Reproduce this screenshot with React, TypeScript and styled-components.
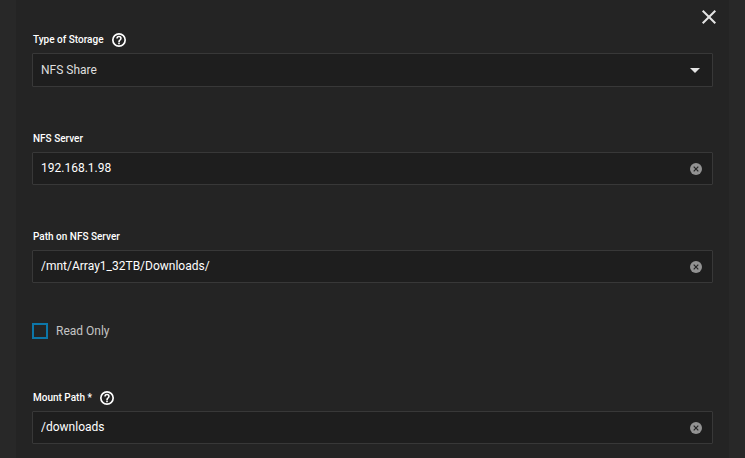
import React, { useState } from "react";
import styled, { createGlobalStyle } from "styled-components";

const GlobalStyle = createGlobalStyle`
  * { box-sizing: border-box; }
  html, body { margin: 0; background: #282828; }
  body { font-family: Roboto, "Liberation Sans", sans-serif; color: #fff; }
`;

const Page = styled.main`
  min-height: 100vh;
  padding: 0 16px;
  background: #282828;
`;

const Panel = styled.form`
  position: relative;
  display: flex;
  flex-direction: column;
  min-height: 100vh;
  padding: 31px 16px 14px;
  background: #242424;
`;

const CloseButton = styled.button`
  position: absolute;
  top: 9px;
  right: 12px;
  display: flex;
  padding: 0;
  border: 0;
  background: none;
  color: #e4e4e4;
  cursor: pointer;
`;

const Field = styled.div<{ $gap?: number }>`
  display: flex;
  flex-direction: column;
  gap: 4px;
  margin-bottom: ${({ $gap = 0 }) => $gap}px;
`;

const LabelRow = styled.div`
  display: flex;
  align-items: center;
  gap: 7px;
  height: 18px;
  padding-left: 1px;
`;

const Label = styled.label`
  font-size: 10px;
  font-weight: 500;
  line-height: 18px;
`;

const HelpButton = styled.button`
  display: flex;
  padding: 0;
  border: 0;
  background: none;
  color: #fff;
  cursor: help;
`;

const Control = styled.div<{ $tall?: boolean }>`
  display: flex;
  align-items: center;
  height: ${({ $tall }) => ($tall ? 34 : 33)}px;
  padding-right: 10px;
  border: 1px solid #383838;
  border-radius: 1px;
  background: #1e1e1e;
`;

const TextInput = styled.input`
  flex: 1;
  min-width: 0;
  height: 100%;
  padding: 0 8px 2px;
  border: 0;
  outline: 0;
  background: none;
  color: #fff;
  font: 400 12px/16px Roboto, "Liberation Sans", sans-serif;
`;

const SelectControl = styled(Control)`
  display: grid;
  padding-right: 0;
  > * { grid-area: 1 / 1; }
  > svg { justify-self: end; margin-right: 12px; pointer-events: none; }
`;

const Select = styled.select`
  appearance: none;
  width: 100%;
  height: 100%;
  padding: 0 32px 0 8px;
  border: 0;
  outline: 0;
  background: #1e1e1e;
  color: #dedede;
  font: 400 12px/16px Roboto, "Liberation Sans", sans-serif;
`;

const ClearButton = styled.button`
  display: flex;
  padding: 0;
  border: 0;
  background: none;
  color: #929292;
  cursor: pointer;
`;

const CheckRow = styled.label`
  display: flex;
  align-items: center;
  align-self: flex-start;
  gap: 8px;
  height: 16px;
  margin-bottom: 50px;
  color: #c4c4c4;
  font-size: 12px;
  line-height: 16px;
`;

const Checkbox = styled.input`
  appearance: none;
  width: 16px;
  height: 16px;
  margin: 0;
  border: 2px solid #0d76a8;
  &:checked { background: #0d76a8; }
`;

function Help({ topic }: { topic: string }) {
  return (
    <HelpButton type="button" aria-label={`Help: ${topic}`}>
      <svg width="16" height="16" viewBox="0 0 24 24" fill="currentColor">
        <path d="M12 1.5a10.5 10.5 0 1 0 0 21 10.5 10.5 0 0 0 0-21zm0 18.5a8 8 0 1 1 0-16 8 8 0 0 1 0 16z" />
        <path d="M10.8 15.9h2.4v2.3h-2.4zM12 5.7a4.1 4.1 0 0 0-4.1 4.1h2.3a1.8 1.8 0 1 1 3.6 0c0 1.9-3 1.8-3 5.1h2.4c0-2.3 2.9-2.6 2.9-5.1A4.1 4.1 0 0 0 12 5.7z" />
      </svg>
    </HelpButton>
  );
}

interface TextFieldProps {
  id: string;
  label: string;
  initial: string;
  gap?: number;
  help?: boolean;
  required?: boolean;
}

function TextField({ id, label, initial, gap, help, required }: TextFieldProps) {
  const [value, setValue] = useState(initial);
  return (
    <Field $gap={gap}>
      <LabelRow>
        <Label htmlFor={id}>{label}{required && " *"}</Label>
        {help && <Help topic={label} />}
      </LabelRow>
      <Control>
        <TextInput id={id} value={value} required={required} spellCheck={false} onChange={(e) => setValue(e.target.value)} />
        <ClearButton type="button" aria-label={`Clear ${label}`} onClick={() => setValue("")}>
          <svg width="12" height="12" viewBox="0 0 12 12">
            <circle cx="6" cy="6" r="6" fill="currentColor" />
            <path d="M3.7 3.7l4.6 4.6M8.3 3.7L3.7 8.3" stroke="#252525" strokeWidth="1.2" />
          </svg>
        </ClearButton>
      </Control>
    </Field>
  );
}

export default function App() {
  return (
    <>
      <GlobalStyle />
      <Page>
        <Panel onSubmit={(e) => e.preventDefault()}>
          <CloseButton type="button" aria-label="Close">
            <svg width="16" height="16" viewBox="0 0 16 16" fill="none" stroke="currentColor" strokeWidth="2">
              <path d="M1.7 1.7l12.6 12.6M14.3 1.7L1.7 14.3" />
            </svg>
          </CloseButton>
          <Field $gap={43}>
            <LabelRow>
              <Label htmlFor="storage-type">Type of Storage</Label>
              <Help topic="Type of Storage" />
            </LabelRow>
            <SelectControl $tall>
              <Select id="storage-type" defaultValue="nfs">
                <option value="nfs">NFS Share</option>
              </Select>
              <svg width="10" height="5" viewBox="0 0 10 5" fill="#e4e4e4">
                <path d="M0 0h10L5 5z" />
              </svg>
            </SelectControl>
          </Field>
          <TextField id="nfs-server" label="NFS Server" initial="192.168.1.98" gap={43} />
          <TextField id="nfs-path" label="Path on NFS Server" initial="/mnt/Array1_32TB/Downloads/" gap={40} />
          <CheckRow>
            <Checkbox type="checkbox" />
            Read Only
          </CheckRow>
          <TextField id="mount-path" label="Mount Path" initial="/downloads" help required />
        </Panel>
      </Page>
    </>
  );
}
